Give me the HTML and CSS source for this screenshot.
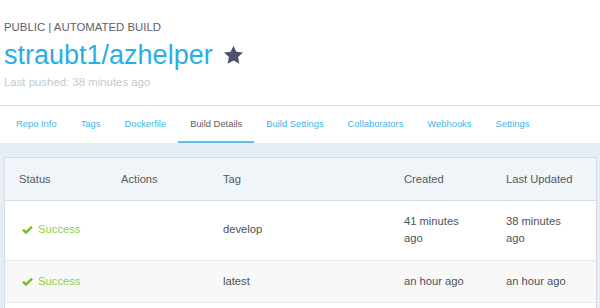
FILE: index.html
```html
<!DOCTYPE html>
<html lang="en">
<head>
    <meta charset="UTF-8">
    <meta name="viewport" content="width=device-width, initial-scale=1.0">
    <title>straubt1/azhelper - Build Details</title>
    <link rel="stylesheet" href="styles.css">
</head>
<body>

    <div class="repo-header">
        <div class="repo-kind">PUBLIC | AUTOMATED BUILD</div>
        <h1 class="repo-title">
            <a href="#">straubt1</a><span class="slash">/</span><a href="#">azhelper</a>
            <svg class="star" width="21" height="20" viewBox="0 0 24 23">
                <path d="M12 0.8l3.3 7 7.6 0.9-5.6 5.2 1.5 7.6L12 17.7l-6.8 3.8 1.5-7.6L1.1 8.7l7.6-0.9z" fill="#4b5567"/>
            </svg>
        </h1>
        <div class="repo-pushed">Last pushed: 38 minutes ago</div>
    </div>

    <ul class="tabs">
        <li><a href="#">Repo Info</a></li>
        <li><a href="#">Tags</a></li>
        <li><a href="#">Dockerfile</a></li>
        <li class="active"><a href="#">Build Details</a></li>
        <li><a href="#">Build Settings</a></li>
        <li><a href="#">Collaborators</a></li>
        <li><a href="#">Webhooks</a></li>
        <li><a href="#">Settings</a></li>
    </ul>

    <div class="page-body">
        <div class="panel">
            <table class="builds">
                <colgroup>
                    <col style="width: 102px">
                    <col style="width: 102px">
                    <col style="width: 181px">
                    <col style="width: 102px">
                    <col>
                </colgroup>
                <thead>
                    <tr>
                        <th>Status</th>
                        <th>Actions</th>
                        <th>Tag</th>
                        <th>Created</th>
                        <th>Last Updated</th>
                    </tr>
                </thead>
                <tbody>
                    <tr>
                        <td class="status">
                            <svg class="check" width="11" height="9" viewBox="0 0 11 9"><path d="M1 4.6l3 3 6-6" fill="none" stroke="#6fc41c" stroke-width="2.4"/></svg>
                            Success
                        </td>
                        <td></td>
                        <td>develop</td>
                        <td>41 minutes ago</td>
                        <td>38 minutes ago</td>
                    </tr>
                    <tr class="alt">
                        <td class="status">
                            <svg class="check" width="11" height="9" viewBox="0 0 11 9"><path d="M1 4.6l3 3 6-6" fill="none" stroke="#6fc41c" stroke-width="2.4"/></svg>
                            Success
                        </td>
                        <td></td>
                        <td>latest</td>
                        <td>an hour ago</td>
                        <td>an hour ago</td>
                    </tr>
                    <tr class="filler">
                        <td></td><td></td><td></td><td></td><td></td>
                    </tr>
                </tbody>
            </table>
        </div>
    </div>

</body>
</html>
```

FILE: styles.css
```css
    body {
        margin: 0;
        padding: 0;
        font-family: 'Liberation Sans', Arial, sans-serif;
        background-color: #fff;
        color: #4a4f55;
    }
    .repo-header {
        padding: 20px 4px 16px 4px;
        border-bottom: 1px solid #d7dde3;
    }
    .repo-kind {
        font-size: 11.4px;
        line-height: 14px;
        color: #5d6166;
    }
    .repo-title {
        margin: 5px 0 0 0;
        font-size: 27px;
        line-height: 32px;
        font-weight: normal;
        color: #2aaee6;
        display: flex;
        align-items: center;
    }
    .repo-title a {
        color: #2aaee6;
        text-decoration: none;
    }
    .repo-title .slash {
        color: #2aaee6;
    }
    .star {
        margin-left: 10px;
        margin-top: -1px;
    }
    .repo-pushed {
        margin-top: 4px;
        font-size: 11.4px;
        line-height: 14px;
        color: #c3c9cf;
    }

    .tabs {
        list-style: none;
        display: flex;
        margin: 0;
        padding: 0 0 0 4px;
        background-color: #fff;
    }
    .tabs li {
        padding: 12px 12px 11px 12px;
        border-bottom: 2px solid transparent;
        font-size: 9.4px;
        line-height: 12px;
    }
    .tabs a {
        color: #45b4e9;
        text-decoration: none;
    }
    .tabs li.active {
        border-bottom-color: #5cc3ee;
    }
    .tabs li.active a {
        color: #5b6066;
    }

    .page-body {
        background-color: #e7edf4;
        padding: 14px 3px 40px 4px;
    }
    .panel {
        background-color: #fff;
        border: 1px solid #d6dde5;
    }
    .builds {
        width: 100%;
        table-layout: fixed;
        border-collapse: collapse;
        font-size: 11.2px;
        line-height: 17.6px;
    }
    .builds th {
        background-color: #f0f5fa;
        font-weight: normal;
        text-align: left;
        color: #555b62;
        padding: 13px 14px 11px 14px;
        border-bottom: 1px solid #d6dde5;
    }
    .builds td {
        padding: 12px 14px;
        vertical-align: middle;
        border-bottom: 1px solid #e6e9ec;
        color: #4d5257;
    }
    .builds tr.alt td {
        background-color: #f8f8f8;
    }
    .builds tr.filler td {
        height: 18px;
    }
    .builds td.status {
        color: #8cd13f;
        padding-left: 17px;
    }
    .check {
        vertical-align: -1px;
        margin-right: 2px;
    }
```
